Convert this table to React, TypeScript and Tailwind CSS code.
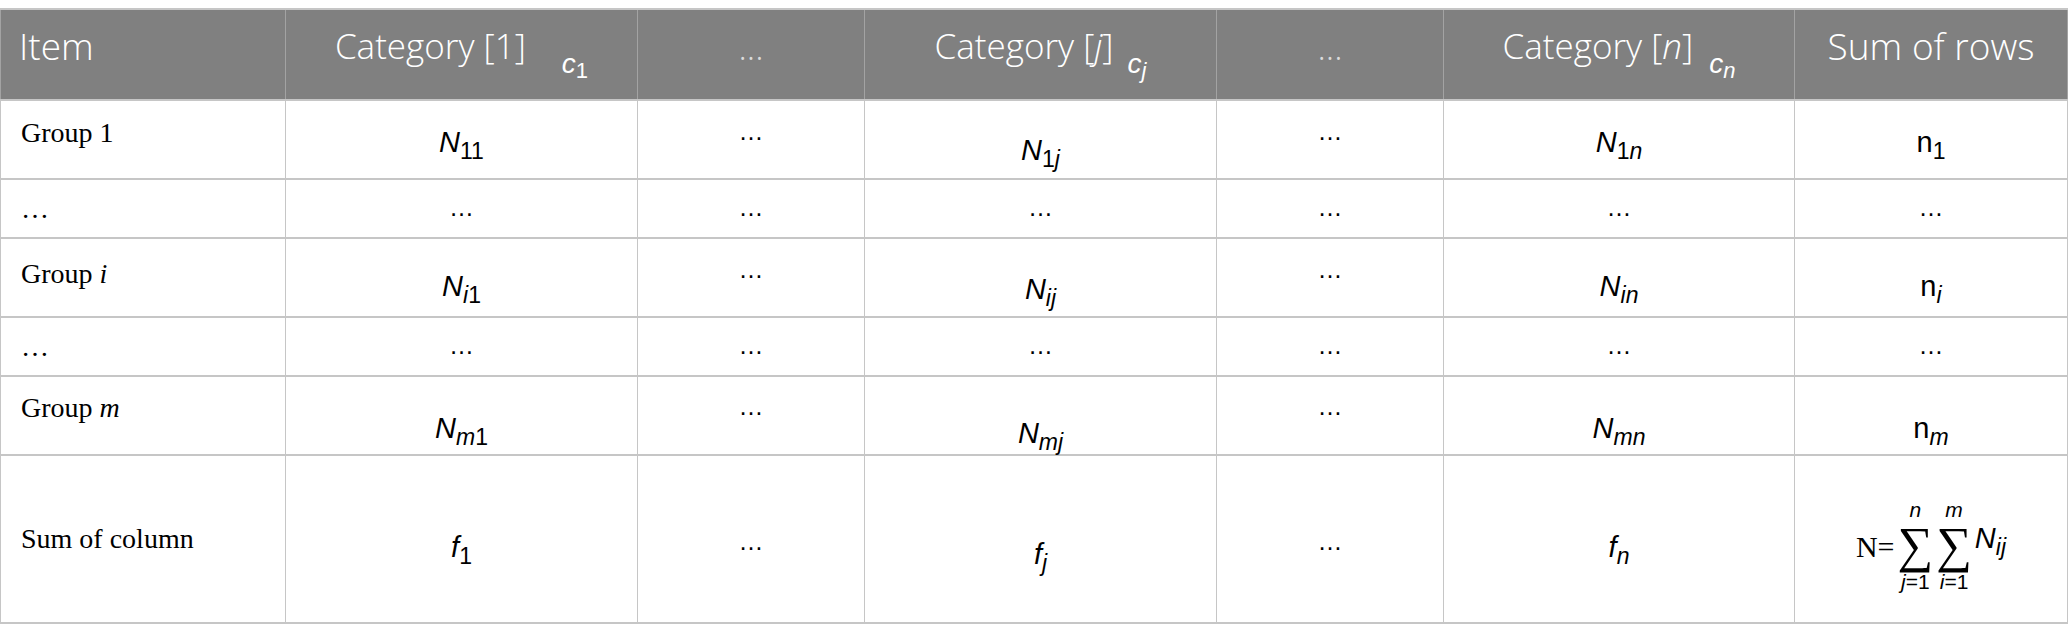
import type { ReactNode } from "react";

const sans = "font-['Liberation_Sans',Arial,sans-serif]";

const Math = ({ base, sub, upright }: { base: ReactNode; sub: ReactNode; upright?: boolean }) => (
  <span className={`${sans} text-[29px] leading-[32px] font-light text-black whitespace-nowrap`}>
    <span className={upright ? "" : "italic"}>{base}</span>
    <span className="text-[23px] leading-[0px] align-[-7px]">{sub}</span>
  </span>
);

const HeadSub = ({ base, sub, className }: { base: ReactNode; sub: ReactNode; className: string }) => (
  <span className={`${sans} italic font-normal text-[28px] leading-[0px] align-[-14px] whitespace-nowrap ${className}`}>
    {base}
    <span className="not-italic text-[22px] leading-[0px] align-[-5px]">{sub}</span>
  </span>
);

const Dots = () => <span className={`${sans} text-[25px] leading-[32px] text-black`}>…</span>;

const I = ({ children }: { children: ReactNode }) => <span className="italic">{children}</span>;

type Row = {
  h: string;
  label: ReactNode;
  labelPad: string;
  dotPad: string;
  mathPad: string;
  midPad: string;
  cells: ReactNode[];
};

const rows: Row[] = [
  {
    h: "h-[79px]",
    label: "Group 1",
    labelPad: "pb-[14px]",
    dotPad: "pb-[14px]",
    mathPad: "pt-[8px]",
    midPad: "pt-[24px]",
    cells: [
      <Math base="N" sub="11" />,
      <Math base="N" sub={<>1<I>j</I></>} />,
      <Math base="N" sub={<>1<I>n</I></>} />,
      <Math base="n" sub="1" upright />,
    ],
  },
  {
    h: "h-[59px]",
    label: "…",
    labelPad: "",
    dotPad: "",
    mathPad: "",
    midPad: "",
    cells: [<Dots />, <Dots />, <Dots />, <Dots />],
  },
  {
    h: "h-[79px]",
    label: <>Group <I>i</I></>,
    labelPad: "pb-[8px]",
    dotPad: "pb-[14px]",
    mathPad: "pt-[20px]",
    midPad: "pt-[26px]",
    cells: [
      <Math base="N" sub={<><I>i</I>1</>} />,
      <Math base="N" sub={<I>ij</I>} />,
      <Math base="N" sub={<I>in</I>} />,
      <Math base="n" sub={<I>i</I>} upright />,
    ],
  },
  {
    h: "h-[59px]",
    label: "…",
    labelPad: "",
    dotPad: "",
    mathPad: "",
    midPad: "",
    cells: [<Dots />, <Dots />, <Dots />, <Dots />],
  },
  {
    h: "h-[79px]",
    label: <>Group <I>m</I></>,
    labelPad: "pb-[16px]",
    dotPad: "pb-[16px]",
    mathPad: "pt-[28px]",
    midPad: "pt-[38px]",
    cells: [
      <Math base="N" sub={<><I>m</I>1</>} />,
      <Math base="N" sub={<I>mj</I>} />,
      <Math base="N" sub={<I>mn</I>} />,
      <Math base="n" sub={<I>m</I>} upright />,
    ],
  },
];

const Limits = ({ top, bottom }: { top: ReactNode; bottom: ReactNode }) => (
  <span className="inline-flex flex-col items-center">
    <span className={`${sans} italic text-[21px] leading-[20px]`}>{top}</span>
    <span className="font-['Liberation_Serif','DejaVu_Serif',serif] text-[50px] leading-[50px]">∑</span>
    <span className={`${sans} text-[21px] leading-[24px] whitespace-nowrap`}>{bottom}</span>
  </span>
);

const tdBase = "border-x border-y-2 border-[#c6c6c6] align-middle text-center leading-[32px]";
const thBase = "border-x border-[#a3a3a3] border-t-2 border-t-[#c6c6c6] font-light align-middle whitespace-nowrap leading-[40px]";

export default function App() {
  return (
    <div className="w-[2068px] h-[640px] bg-white pt-[8px]">
      <table className="w-[2067px] table-fixed border-collapse">
        <colgroup>
          <col className="w-[285px]" />
          <col className="w-[352px]" />
          <col className="w-[227px]" />
          <col className="w-[352px]" />
          <col className="w-[227px]" />
          <col className="w-[351px]" />
          <col className="w-[273px]" />
        </colgroup>
        <thead>
          <tr className="h-[91px] bg-[#808080] font-['Open_Sans',sans-serif] text-[35px] text-white">
            <th className={`${thBase} text-left pl-[18px] pb-[18px] text-[37px]`}>Item</th>
            <th className={`${thBase} text-center pb-[12px]`}>
              Category [1]
              <HeadSub base="c" sub="1" className="ml-[36px]" />
            </th>
            <th className={`${thBase} text-center pb-[16px] text-[#dcdcdc]`}>...</th>
            <th className={`${thBase} text-center pb-[12px]`}>
              Category [<I>j</I>]
              <HeadSub base="c" sub={<I>j</I>} className="ml-[14px]" />
            </th>
            <th className={`${thBase} text-center pb-[16px] text-[#dcdcdc]`}>...</th>
            <th className={`${thBase} text-center pb-[12px]`}>
              Category [<I>n</I>]
              <HeadSub base="c" sub={<I>n</I>} className="ml-[16px] font-bold" />
            </th>
            <th className={`${thBase} text-center pb-[18px] text-[37px]`}>Sum of rows</th>
          </tr>
        </thead>
        <tbody className="text-black">
          {rows.map((r, i) => (
            <tr key={i} className={r.h}>
              <td className={`border-x border-y-2 border-[#c6c6c6] align-middle text-left pl-[20px] font-['Liberation_Serif','Times_New_Roman',serif] text-[28px] leading-[32px] ${r.labelPad}`}>
                {r.label}
              </td>
              <td className={`${tdBase} ${r.mathPad}`}>{r.cells[0]}</td>
              <td className={`${tdBase} ${r.dotPad}`}>
                <Dots />
              </td>
              <td className={`${tdBase} ${r.midPad}`}>{r.cells[1]}</td>
              <td className={`${tdBase} ${r.dotPad}`}>
                <Dots />
              </td>
              <td className={`${tdBase} ${r.mathPad}`}>{r.cells[2]}</td>
              <td className={`${tdBase} ${r.mathPad}`}>{r.cells[3]}</td>
            </tr>
          ))}
          <tr className="h-[168px]">
            <td className="border-x border-y-2 border-[#c6c6c6] align-middle text-left pl-[20px] font-['Liberation_Serif','Times_New_Roman',serif] text-[28px] leading-[32px]">
              Sum of column
            </td>
            <td className={`${tdBase} pt-[20px]`}>
              <Math base="f" sub="1" />
            </td>
            <td className={`${tdBase} pt-[6px]`}>
              <Dots />
            </td>
            <td className={`${tdBase} pt-[34px]`}>
              <Math base="f" sub={<I>j</I>} />
            </td>
            <td className={`${tdBase} pt-[6px]`}>
              <Dots />
            </td>
            <td className={`${tdBase} pt-[20px]`}>
              <Math base="f" sub={<I>n</I>} />
            </td>
            <td className={`${tdBase} pt-[16px]`}>
              <span className="inline-flex items-center gap-[3px]">
                <span className="font-['Liberation_Serif','Times_New_Roman',serif] text-[30px]">N=</span>
                <Limits top="n" bottom={<><I>j</I>=1</>} />
                <Limits top="m" bottom={<><I>i</I>=1</>} />
                <span className="self-center -mt-[14px]">
                  <Math base="N" sub={<I>ij</I>} />
                </span>
              </span>
            </td>
          </tr>
        </tbody>
      </table>
    </div>
  );
}
